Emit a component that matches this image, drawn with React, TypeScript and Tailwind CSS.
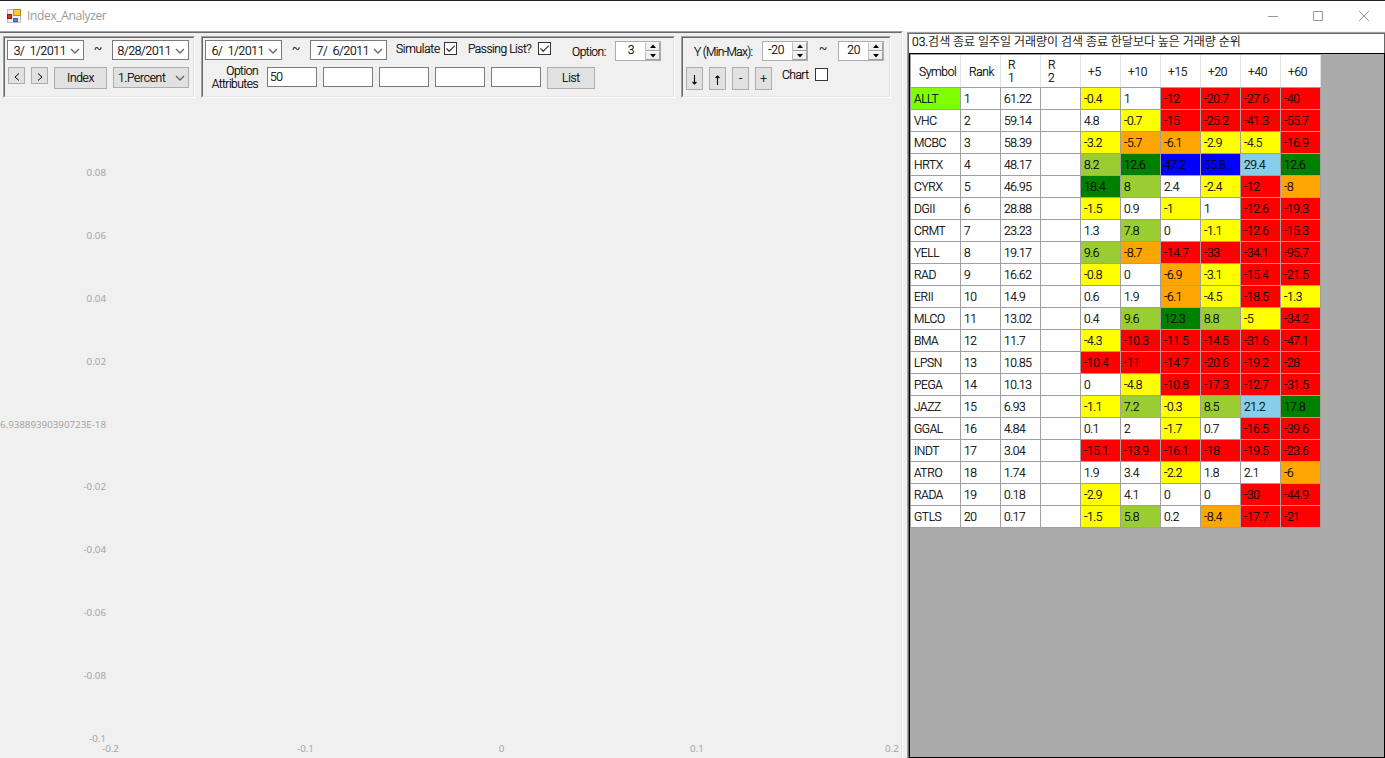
import React from "react";

const UI = "font-['Roboto','Noto_Sans_CJK_KR',sans-serif] font-light [-webkit-text-stroke:0.2px_currentColor]";

const tones: Record<string, string> = {
  w: "bg-white",
  y: "bg-[#ffff00]",
  o: "bg-[#ffa500]",
  r: "bg-[#ff0000]",
  l: "bg-[#9acd32]",
  g: "bg-[#008000]",
  b: "bg-[#0000ff]",
  s: "bg-[#87ceeb]",
};

/* symbol, R1, the six forward returns, and one tone letter per return */
const rows: [string, string, string, string][] = [
  ["ALLT", "61.22", "-0.4 1 -12 -20.7 -27.6 -40", "ywrrrr"],
  ["VHC", "59.14", "4.8 -0.7 -15 -25.2 -41.3 -55.7", "wyrrrr"],
  ["MCBC", "58.39", "-3.2 -5.7 -6.1 -2.9 -4.5 -16.9", "yooyyr"],
  ["HRTX", "48.17", "8.2 12.6 47.2 55.8 29.4 12.6", "lgbbsg"],
  ["CYRX", "46.95", "18.4 8 2.4 -2.4 -12 -8", "glwyro"],
  ["DGII", "28.88", "-1.5 0.9 -1 1 -12.6 -19.3", "ywywrr"],
  ["CRMT", "23.23", "1.3 7.8 0 -1.1 -12.6 -15.3", "wlwyrr"],
  ["YELL", "19.17", "9.6 -8.7 -14.7 -33 -34.1 -95.7", "lorrrr"],
  ["RAD", "16.62", "-0.8 0 -6.9 -3.1 -15.4 -21.5", "ywoyrr"],
  ["ERII", "14.9", "0.6 1.9 -6.1 -4.5 -18.5 -1.3", "wwoyry"],
  ["MLCO", "13.02", "0.4 9.6 12.3 8.8 -5 -34.2", "wlglyr"],
  ["BMA", "11.7", "-4.3 -10.3 -11.5 -14.5 -31.6 -47.1", "yrrrrr"],
  ["LPSN", "10.85", "-10.4 -11 -14.7 -20.6 -19.2 -28", "rrrrrr"],
  ["PEGA", "10.13", "0 -4.8 -10.8 -17.3 -12.7 -31.5", "wyrrrr"],
  ["JAZZ", "6.93", "-1.1 7.2 -0.3 8.5 21.2 17.8", "ylylsg"],
  ["GGAL", "4.84", "0.1 2 -1.7 0.7 -16.5 -39.6", "wwywrr"],
  ["INDT", "3.04", "-15.1 -13.9 -16.1 -18 -19.5 -23.6", "rrrrrr"],
  ["ATRO", "1.74", "1.9 3.4 -2.2 1.8 2.1 -6", "wwywwo"],
  ["RADA", "0.18", "-2.9 4.1 0 0 -30 -44.9", "ywwwrr"],
  ["GTLS", "0.17", "-1.5 5.8 0.2 -8.4 -17.7 -21", "ylworr"],
];

const yTicks: [string, number][] = [
  ["0.08", 173], ["0.06", 236], ["0.04", 299], ["0.02", 362],
  ["6.93889390390723E-18", 425], ["-0.02", 487], ["-0.04", 550],
  ["-0.06", 613], ["-0.08", 676], ["-0.1", 739],
];
const xTicks: [string, number][] = [
  ["-0.2", 110.5], ["-0.1", 305.5], ["0", 501.5], ["0.1", 697], ["0.2", 892],
];

function Chevron() {
  return (
    <svg width="10" height="6" viewBox="0 0 10 6" fill="none" stroke="#666" strokeWidth="1.3" className="shrink-0">
      <path d="M1 1l4 4 4-4" />
    </svg>
  );
}

function Panel({ className, children }: { className: string; children: React.ReactNode }) {
  return (
    <div className={"h-[62px] shrink-0 border border-t-[#a0a0a0] border-l-[#a0a0a0] border-r-white border-b-white " + className}>
      <div className="h-full border border-t-[#696969] border-l-[#696969] border-r-[#e3e3e3] border-b-[#e3e3e3]">{children}</div>
    </div>
  );
}

function DateBox({ text, className = "" }: { text: string; className?: string }) {
  return (
    <div className={"flex h-5 w-[77px] shrink-0 items-center justify-end border border-[#7a7a7a] bg-white pr-[3px] pt-px " + className}>
      <span className="mr-[4px] whitespace-pre leading-none tracking-[-0.3px]">{text}</span>
      <Chevron />
    </div>
  );
}

function Button({ className, children }: { className: string; children: React.ReactNode }) {
  return (
    <button className={"flex shrink-0 items-center justify-center border border-[#adadad] bg-[#e1e1e1] leading-none " + className}>
      {children}
    </button>
  );
}

function Check({ on = false, className }: { on?: boolean; className: string }) {
  return (
    <span className={"block size-[13px] shrink-0 border border-[#333] bg-white " + className}>
      {on && (
        <svg width="11" height="11" viewBox="0 0 11 11" fill="none" stroke="#444" strokeWidth="1.3">
          <path d="M1.500 5.500l2.700 2.800L9.800 2.600" />
        </svg>
      )}
    </span>
  );
}

function Spinner({ text, className }: { text: string; className: string }) {
  return (
    <div className={"flex h-5 w-[46px] shrink-0 border border-[#abadb3] bg-white " + className}>
      <span className={"grow pt-[2px] text-right leading-[12px] " + (text.length > 1 ? "mr-[8px]" : "mr-[11px]")}>{text}</span>
      <span className="flex w-[15px] shrink-0 flex-col">
        {["M2 5h6L5 1.500z", "M2 2h6L5 5.500z"].map((d) => (
          <span key={d} className="flex h-[9px] items-center justify-center border border-t-white border-l-[#c0c0c0] border-r-[#a0a0a0] border-b-[#a0a0a0] bg-[#f0f0f0]">
            <svg width="10" height="7" viewBox="0 0 10 7" className="shrink-0"><path d={d} fill="#000" /></svg>
          </span>
        ))}
      </span>
    </div>
  );
}

function Label({ className, children }: { className: string; children: React.ReactNode }) {
  return <span className={"shrink-0 whitespace-nowrap leading-[12px] " + className}>{children}</span>;
}

function Arrow({ up = false }: { up?: boolean }) {
  return (
    <svg width="7" height="10" viewBox="0 0 7 10" fill="none" stroke="#000" strokeWidth="1.1" className="mt-[3px]">
      <path d={up ? "M3.500 10V1M1.500 3L3.500 1l2 2" : "M3.500 0v9M1.500 7l2 2 2-2"} />
    </svg>
  );
}

function Toolbar() {
  return (
    <div className="flex pl-[3px] pt-[3px]">
      <Panel className="w-[192px]">
        <div className="flex h-[29px] pl-[2px] pt-[2px]">
          <DateBox text="3/  1/2011" />
          <Label className="ml-[10px] mt-[3px] w-[18px]">~</Label>
          <DateBox text="8/28/2011" />
        </div>
        <div className="flex pl-[3px]">
          <Button className="h-[17px] w-[17px]"><svg width="6" height="8" viewBox="0 0 6 8" fill="none" stroke="#000" className="mt-[3px]"><path d="M5 .5L1 4l4 3.500" /></svg></Button>
          <Button className="ml-[6px] h-[17px] w-[17px]"><svg width="6" height="8" viewBox="0 0 6 8" fill="none" stroke="#000" className="mt-[3px]"><path d="M1 .5L5 4 1 7.500" /></svg></Button>
          <Button className="ml-[6px] h-[22px] w-[53px]">Index</Button>
          <div className="ml-[6px] flex h-[21px] w-[76px] items-center justify-between border border-[#adadad] bg-[#e1e1e1] pl-[4px] pr-[3px]">
            <span className="tracking-[-0.25px]">1.Percent</span>
            <Chevron />
          </div>
        </div>
      </Panel>

      <Panel className="ml-[6px] w-[474px]">
        <div className="flex h-[29px] pl-[2px] pt-[2px]">
          <DateBox text="6/  1/2011" />
          <Label className="ml-[10px] mt-[3px] w-[18px]">~</Label>
          <DateBox text="7/  6/2011" />
          <Label className="ml-[9px] mt-[3px] w-[48px]">Simulate</Label>
          <Check on className="mt-[2px]" />
          <Label className="ml-[11px] mt-[3px] w-[70px] tracking-[-0.45px]">Passing List?</Label>
          <Check on className="mt-[2px]" />
          <Label className="ml-[21px] mt-[6px] w-[43px] tracking-[-0.5px]">Option:</Label>
          <Spinner text="3" className="mt-px" />
        </div>
        <div className="flex">
          <div className="mt-[-2px] w-[55px] text-right leading-[13px] tracking-[-0.5px]">Option<br />Attributes</div>
          <div className="ml-[9px] flex gap-[6px]">
            {["50", "", "", "", ""].map((v, i) => (
              <div key={i} className="flex h-5 w-[50px] items-center border border-[#7a7a7a] bg-white pl-[2px]">{v}</div>
            ))}
            <Button className="h-[22px] w-[48px]">List</Button>
          </div>
        </div>
      </Panel>

      <Panel className="ml-[6px] w-[210px]">
        <div className="flex h-[29px] pl-[11px] pt-[2px]">
          <Label className="mt-[6px] w-[68px] tracking-[-0.65px]">Y (Min-Max):</Label>
          <Spinner text="-20" className="mt-px" />
          <Label className="ml-[11px] mt-[3px] w-[19px]">~</Label>
          <Spinner text="20" className="mt-px" />
        </div>
        <div className="flex pl-[3px]">
          <div className="flex gap-[6px]">
            <Button className="h-[23px] w-[17px]"><Arrow /></Button>
            <Button className="h-[23px] w-[17px]"><Arrow up /></Button>
            <Button className="h-[23px] w-[17px] pt-px">-</Button>
            <Button className="h-[23px] w-[17px] pt-px">+</Button>
          </div>
          <Label className="ml-[10px] mt-[2px] w-[33px] tracking-[-0.5px]">Chart</Label>
          <Check className="mt-px" />
        </div>
      </Panel>
    </div>
  );
}

function Chart() {
  return (
    <svg width="901" height="660" viewBox="0 98 901 660" className="block shrink-0 font-['Open_Sans','Noto_Sans',sans-serif] text-[9.8px] font-normal tracking-[0px] [-webkit-text-stroke:0]" fill="#a0a0a0">
      {yTicks.map(([t, y]) => (
        <text key={t} x="106" y={y + 3} textAnchor="end" textLength={t.length > 8 ? 106 : undefined}>{t}</text>
      ))}
      {xTicks.map(([t, x]) => (
        <text key={t} x={x} y="752" textAnchor="middle">{t}</text>
      ))}
    </svg>
  );
}

function Results() {
  const cell = "h-[22px] border-r border-b border-[#a0a0a0] pl-[3px] pt-[4px] leading-[14px] whitespace-nowrap ";
  return (
    <section className="flex h-[726px] w-[478px] shrink-0 flex-col border-t border-l border-[#a0a0a0]">
      <div className="flex min-h-0 grow flex-col border-t border-l border-[#696969]">
        <div className="h-[19px] shrink-0 border-r border-[#696969] bg-white pl-[3px] text-[12px] leading-[17px] tracking-[-0.02px] whitespace-nowrap">
          03.검색 종료 일주일 거래량이 검색 종료 한달보다 높은 거래량 순위
        </div>
        <div className="min-h-0 grow border border-black bg-[#ababab]">
          <div className="w-[411px] border-t border-l border-[#a0a0a0] tracking-[-0.37px]">
            <div className="grid h-[33px] grid-cols-[50px_repeat(9,40px)] border-b border-[#a0a0a0] bg-white leading-[13px]">
              {["Symbol", "Rank", "R 1", "R 2", "+5", "+10", "+15", "+20", "+40", "+60"].map((h) => (
                <div key={h} className="flex items-center border-r border-[#e3e3e3] pl-[7px] pt-[2px]">
                  <span className={h.startsWith("R ") ? "w-2" : /^[SR]/.test(h) ? "ml-px" : ""}>{h}</span>
                </div>
              ))}
            </div>
            {rows.map(([sym, r1, vals, tone], i) => (
              <div key={sym} className="grid grid-cols-[50px_repeat(9,40px)]">
                <div className={cell + (i === 0 ? "bg-[#7fff00]" : "bg-white")}>{sym}</div>
                <div className={cell + "bg-white"}>{i + 1}</div>
                <div className={cell + "bg-white"}>{r1}</div>
                <div className={cell + "bg-white"} />
                {vals.split(" ").map((v, j) => (
                  <div key={j} className={cell + tones[tone[j]]}>{v}</div>
                ))}
              </div>
            ))}
          </div>
        </div>
      </div>
    </section>
  );
}

export default function App() {
  return (
    <div className={"flex h-[758px] w-[1385px] flex-col overflow-hidden bg-[#f0f0f0] text-[12px] tracking-[-0.3px] text-black " + UI}>
      <header className="flex h-[31px] shrink-0 items-center border-t border-[#222] bg-white pl-[7px]">
        <svg width="14" height="14" viewBox="0 0 14 14">
          <rect x=".5" y=".5" width="13" height="13" fill="#eee" stroke="#bbb" />
          <rect x="6.5" y=".5" width="7" height="6" fill="#ffc936" stroke="#c48a12" />
          <rect x=".5" y="5.5" width="4" height="4" fill="#e03020" stroke="#8e1a10" />
          <rect x="6.5" y="9.5" width="4" height="3" fill="#4a8cf0" stroke="#2b62c0" />
        </svg>
        <span className="ml-[6px] font-['Open_Sans',sans-serif] text-[12px] font-normal tracking-[-0.35px] text-[#999] [-webkit-text-stroke:0]">Index_Analyzer</span>
        <svg width="104" height="12" viewBox="0 0 104 12" fill="none" stroke="#999" className="mb-px ml-auto mr-[14px]">
          <path d="M1 6.500h10M46.500 1.500h9v9h-9zM92 1l10 10M102 1L92 11" />
        </svg>
      </header>
      <main className="flex h-[727px] shrink-0">
        <section className="flex w-[903px] shrink-0 flex-col border-t border-r border-t-[#a0a0a0] border-r-white">
          <div className="h-[726px] border-t border-r border-t-[#696969] border-r-[#e3e3e3]">
            <div className="h-[65px]"><Toolbar /></div>
            <Chart />
          </div>
        </section>
        <div className="w-1 shrink-0" />
        <div className="pt-px"><Results /></div>
      </main>
    </div>
  );
}
